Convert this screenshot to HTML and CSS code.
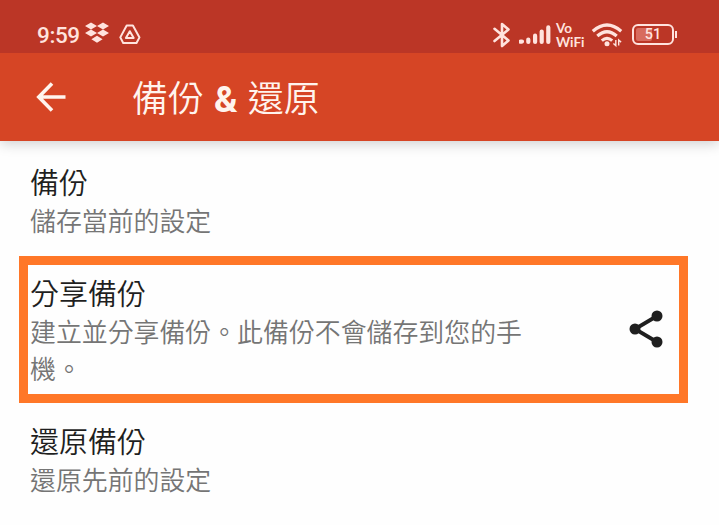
FILE: index.html
```html
<!DOCTYPE html>
<html lang="zh-Hant">
<head>
    <meta charset="UTF-8">
    <meta name="viewport" content="width=device-width, initial-scale=1.0">
    <title>備份 & 還原</title>
    <link rel="stylesheet" href="styles.css">
</head>
<body>
    <div class="screen">
        <!-- Status bar -->
        <div class="status-bar">
            <div class="status-left">
                <span class="clock">9:59</span>
                <svg class="dropbox-icon" width="24" height="22" viewBox="0 0 24 22">
                    <path d="M6 0.5L12 4L6 7.5L0 4zM18 0.5L24 4L18 7.5L12 4zM6 7.5L12 11L6 14.5L0 11zM18 7.5L24 11L18 14.5L12 11zM12 13.8L17.6 17.2L12 20.8L6.4 17.2z"/>
                </svg>
                <svg class="drive-icon" width="22" height="21" viewBox="0 0 22 21">
                    <path d="M7.7 1.5h6.2l6.6 11.9-3 5.6H4.2l-2.9-5.6z"/>
                    <path d="M10.8 7.2l3.9 6.8H6.9z"/>
                </svg>
            </div>
            <div class="status-right">
                <svg class="bluetooth-icon" width="18" height="26" viewBox="0 0 18 26">
                    <path d="M1.5 6.8L15.5 18.4L9 24V2L15.5 7.4L1.5 19"/>
                </svg>
                <svg class="signal-icon" width="34" height="22" viewBox="0 0 34 22">
                    <path d="M1.6 17.6h1.4M9.3 18v-2.4M16.1 18v-6.3M22.7 18v-10.5M29.3 18v-14.6"/>
                </svg>
                <div class="vowifi"><span>Vo</span><span>WiFi</span></div>
                <svg class="wifi-icon" width="32" height="26" viewBox="0 0 32 26">
                    <path class="arc" d="M1.8 9.2Q16 -3.2 30.2 9.2M6.3 14Q16 5.5 25.7 14M10.8 18.6Q16 14.2 21.2 18.6"/>
                    <circle cx="16" cy="21.7" r="2.5"/>
                    <path class="traffic" d="M24.8 18v5.6l-2.4-2.1M27.7 23.6V18l2.4 2.1"/>
                </svg>
                <div class="battery">
                    <div class="battery-body">
                        <div class="battery-level"></div>
                        <span class="battery-text">51</span>
                    </div>
                    <div class="battery-tip"></div>
                </div>
            </div>
        </div>

        <!-- App bar -->
        <header class="app-bar">
            <svg class="back-icon" width="30" height="30" viewBox="0 0 30 30">
                <path d="M29.5 15H2.5M16 1.6L2.8 15L16 28.4"/>
            </svg>
            <h1 class="app-title">備份 <b>&amp;</b> 還原</h1>
        </header>

        <!-- Settings -->
        <main class="settings">
            <div class="setting">
                <div class="setting-text">
                    <h2>備份</h2>
                    <p>儲存當前的設定</p>
                </div>
            </div>
            <div class="setting highlighted">
                <div class="setting-text">
                    <h2>分享備份</h2>
                    <p>建立並分享備份。此備份不會儲存到您的手機。</p>
                </div>
                <svg class="share-icon" width="34" height="38" viewBox="0 0 34 38">
                    <path d="M28 6L6 19L28 32"/>
                    <circle cx="28" cy="6" r="5.5"/>
                    <circle cx="6" cy="19" r="5.5"/>
                    <circle cx="28" cy="32" r="5.5"/>
                </svg>
            </div>
            <div class="setting">
                <div class="setting-text">
                    <h2>還原備份</h2>
                    <p>還原先前的設定</p>
                </div>
            </div>
        </main>
    </div>
</body>
</html>
```
FILE: styles.css
```css
* {
    box-sizing: border-box;
}
body {
    margin: 0;
    background-color: #fff;
    font-family: Roboto, "Noto Sans CJK TC", sans-serif;
}
.screen {
    width: 719px;
    height: 525px;
    overflow: hidden;
    background-color: #fefefe;
}
.status-bar {
    position: relative;
    z-index: 1; /* keeps the app bar shadow below it */
    display: flex;
    justify-content: space-between;
    height: 53px;
    padding: 16px 42px 0 37px;
    background-color: #bb3626;
    color: #ffe3de;
}
.status-left,
.status-right {
    display: flex;
    align-items: center;
    height: 37px;
}
.clock {
    width: 48px;
    padding-top: 2px;
    font-size: 22.5px;
    font-weight: 500;
    line-height: 37px;
    letter-spacing: -0.4px;
}
.dropbox-icon {
    margin-top: -3px;
    fill: #ffe3de;
}
.drive-icon {
    margin: -1px 0 0 10px;
    fill: none;
    stroke: #ffe3de;
    stroke-width: 2;
    stroke-linejoin: round;
}
.bluetooth-icon {
    margin-right: 1px;
    fill: none;
    stroke: #ffe3de;
    stroke-width: 2.6;
    stroke-linejoin: round;
    stroke-linecap: round;
}
.signal-icon {
    margin-left: 7px;
    fill: none;
    stroke: #ffe3de;
    stroke-width: 4.2;
    stroke-linecap: round;
}
.vowifi {
    display: flex;
    flex-direction: column;
    width: 29px;
    margin-left: 3px;
    font-family: Lato, sans-serif;
    font-size: 13.5px;
    font-weight: bold;
    line-height: 14px;
}
.wifi-icon {
    margin-left: 6px;
    fill: #ffe3de;
}
.wifi-icon .arc {
    fill: none;
    stroke: #ffe3de;
    stroke-width: 3.2;
}
.wifi-icon .traffic {
    fill: none;
    stroke: #ffe3de;
    stroke-width: 1.4;
}
.battery {
    display: flex;
    align-items: center;
    margin-left: 9px;
}
.battery-body {
    position: relative;
    width: 42px;
    height: 21px;
    padding: 2px;
    border: 2px solid #ffe3de;
    border-radius: 6px;
}
.battery-level {
    width: 16px;
    height: 13px;
    border-radius: 2px;
    background-color: #d86b5e;
}
.battery-text {
    position: absolute;
    inset: 0;
    font-size: 14.5px;
    font-weight: 500;
    line-height: 18px;
    text-align: center;
}
.battery-tip {
    width: 2px;
    height: 7px;
    margin-left: 1px;
    background-color: #ffe3de;
}
.app-bar {
    display: flex;
    align-items: center;
    height: 88px;
    padding-left: 36px;
    background-color: #d64525;
    box-shadow: 0 3px 12px rgba(0, 0, 0, 0.18);
    color: #fff4ee;
}
.back-icon {
    fill: none;
    stroke: #fff4ee;
    stroke-width: 3.6;
}
.app-title {
    margin: 0 0 0 66px;
    padding-top: 5px;
    font-size: 36px;
    font-weight: 350;
    line-height: 52px;
    word-spacing: 1.2px;
}
.app-title b {
    font-weight: 700;
}
.settings {
    padding: 14px 31px 0 19px;
}
.setting {
    display: flex;
    align-items: center;
    justify-content: space-between;
    padding: 10px 17px 7px 11px;
}
.setting-text {
    width: 500px;
}
.setting h2 {
    margin: 0;
    font-size: 29px;
    font-weight: 350;
    line-height: 38px;
    color: #1f1f1f;
}
.setting p {
    margin: 0;
    padding-top: 1px;
    font-size: 25.9px;
    font-weight: 350;
    line-height: 37.5px;
    color: #757575;
}
.highlighted {
    height: 147px;
    margin: 7px 0 11px;
    padding: 0 16px 0 2px;
    border: 9px solid #ff7728;
}
.highlighted .setting-text {
    padding-top: 7px;
}
.share-icon {
    fill: #1f1f1f;
}
.share-icon path {
    fill: none;
    stroke: #1f1f1f;
    stroke-width: 3.8;
}
```
